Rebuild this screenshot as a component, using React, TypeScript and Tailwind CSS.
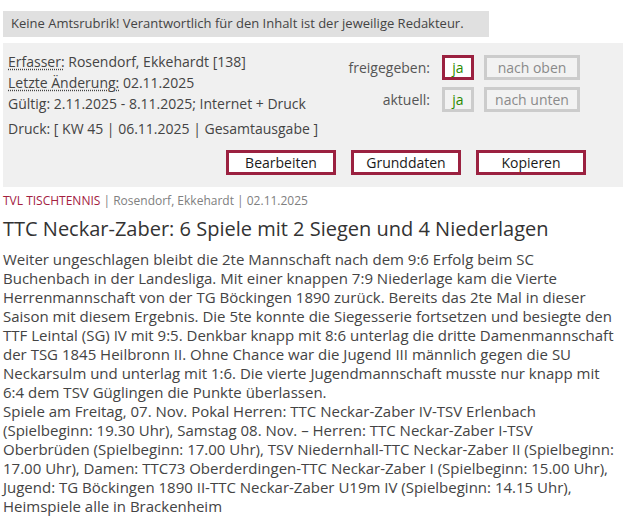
import React from "react";

const font = { fontFamily: '"Open Sans", "Liberation Sans", sans-serif' };

function StateBox({ active, children }: { active?: boolean; children: React.ReactNode }) {
  return (
    <span
      className={
        "flex h-[25px] w-[32px] items-center justify-center border-[3px] text-[14px] text-[#2b8a00] " +
        (active ? "border-[#9b2140] bg-white" : "border-[#cccccc] bg-[#f2f2f2]")
      }
    >
      {children}
    </span>
  );
}

function MoveBox({ children }: { children: React.ReactNode }) {
  return (
    <span className="flex h-[25px] w-[96px] items-center justify-center border-[3px] border-[#cccccc] bg-[#f2f2f2] text-[14px] text-[#8a8a8a]">
      {children}
    </span>
  );
}

function ActionButton({ children }: { children: React.ReactNode }) {
  return (
    <button className="flex h-[25px] w-[110px] items-center justify-center border-[3px] border-[#9b2140] bg-white text-[14px] text-[#1a1a1a]">
      {children}
    </button>
  );
}

export default function App() {
  return (
    <div className="min-h-[526px] bg-white pl-[3px] pt-[11px] text-[#444]" style={font}>
      <div className="flex h-[26px] w-[486px] items-center bg-[#e0e0e0] pl-[8px] text-[13px] text-[#444]">
        Keine Amtsrubrik! Verantwortlich für den Inhalt ist der jeweilige Redakteur.
      </div>

      <div className="mr-[4px] mt-[6px] bg-[#f0f0f0] pb-[12px] pl-[5px] pt-[8px]">
        <div className="flex">
          <div className="w-[327px] text-[14px] leading-[21px] text-[#444]">
            <div>
              <span className="underline decoration-dotted underline-offset-2">Erfasser:</span> Rosendorf, Ekkehardt [138]
            </div>
            <div>
              <span className="underline decoration-dotted underline-offset-2">Letzte Änderung:</span> 02.11.2025
            </div>
            <div>Gültig: 2.11.2025 - 8.11.2025; Internet + Druck</div>
            <div className="mt-[4px]">Druck: [ KW 45 | 06.11.2025 | Gesamtausgabe ]</div>
          </div>
          <div className="flex flex-1 flex-col gap-[7px] pt-[4px]">
            <div className="flex items-center">
              <span className="w-[107px] pr-[12px] text-right text-[14px] text-[#555]">freigegeben:</span>
              <StateBox active>ja</StateBox>
              <span className="w-[10px]" />
              <MoveBox>nach oben</MoveBox>
            </div>
            <div className="flex items-center">
              <span className="w-[107px] pr-[12px] text-right text-[14px] text-[#555]">aktuell:</span>
              <StateBox>ja</StateBox>
              <span className="w-[10px]" />
              <MoveBox>nach unten</MoveBox>
            </div>
          </div>
        </div>
        <div className="mt-[11px] flex gap-[15px] pl-[218px]">
          <ActionButton>Bearbeiten</ActionButton>
          <ActionButton>Grunddaten</ActionButton>
          <ActionButton>Kopieren</ActionButton>
        </div>
      </div>

      <div className="mt-[5px] text-[12px] text-[#808080]">
        <span className="text-[#a3213f]">TVL TISCHTENNIS</span> | Rosendorf, Ekkehardt | 02.11.2025
      </div>

      <h1 className="mt-[5px] text-[20px] leading-[27px] text-[#333]">
        TTC Neckar-Zaber: 6 Spiele mit 2 Siegen und 4 Niederlagen
      </h1>

      <div className="mt-[8px] w-[616px] text-[15px] leading-[19px] text-[#444]">
        <p>
          Weiter ungeschlagen bleibt die 2te Mannschaft nach dem 9:6 Erfolg beim SC Buchenbach in der Landesliga. Mit einer knappen 7:9 Niederlage kam die Vierte Herrenmannschaft von der TG Böckingen 1890 zurück. Bereits das 2te Mal in dieser Saison mit diesem Ergebnis. Die 5te konnte die Siegesserie fortsetzen und besiegte den TTF Leintal (SG) IV mit 9:5. Denkbar knapp mit 8:6 unterlag die dritte Damenmannschaft der TSG 1845 Heilbronn II. Ohne Chance war die Jugend III männlich gegen die SU Neckarsulm und unterlag mit 1:6. Die vierte Jugendmannschaft musste nur knapp mit 6:4 dem TSV Güglingen die Punkte überlassen.
        </p>
        <p>
          Spiele am Freitag, 07. Nov. Pokal Herren: TTC Neckar-Zaber IV-TSV Erlenbach (Spielbeginn: 19.30 Uhr), Samstag 08. Nov. – Herren: TTC Neckar-Zaber I-TSV Oberbrüden (Spielbeginn: 17.00 Uhr), TSV Niedernhall-TTC Neckar-Zaber II (Spielbeginn: 17.00 Uhr), Damen: TTC73 Oberderdingen-TTC Neckar-Zaber I (Spielbeginn: 15.00 Uhr), Jugend: TG Böckingen 1890 II-TTC Neckar-Zaber U19m IV (Spielbeginn: 14.15 Uhr), Heimspiele alle in Brackenheim
        </p>
      </div>
    </div>
  );
}
